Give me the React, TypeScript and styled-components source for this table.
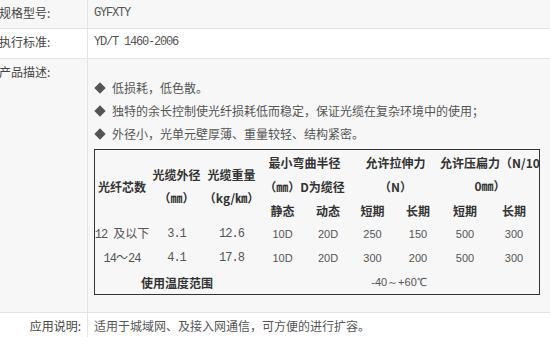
import React, { FC } from 'react';
import styled, { createGlobalStyle } from 'styled-components';

const GlobalStyle = createGlobalStyle`
  body {
    margin: 0;
    background: #ffffff;
    font-family: 'Noto Sans CJK SC', 'Liberation Sans', sans-serif;
    font-size: 12px;
    color: #444;
  }
`;

const StyledSpec = styled.div`
  width: 550px;
  overflow: hidden;
`;

const StyledRow = styled.div<{ $shade?: boolean; $height?: number }>`
  display: grid;
  grid-template-columns: 88px 1fr;
  min-height: ${({ $height }) => ($height ? `${$height}px` : 'auto')};
  background: ${({ $shade }) => ($shade ? '#f7f7f7' : '#ffffff')};
  border-bottom: 1px solid #e4e4e4;
`;

const StyledLabel = styled.div<{ $right?: boolean }>`
  border-right: 1px solid #e4e4e4;
  padding: 3px 6px 0 0;
  line-height: 20px;
  color: #444;
  white-space: nowrap;
  text-align: ${({ $right }) => ($right ? 'right' : 'left')};
  text-indent: ${({ $right }) => ($right ? '0' : '-1px')};
`;

const StyledValue = styled.div<{ $mono?: boolean }>`
  padding: 3px 0 0 6px;
  line-height: 20px;
  color: #555;
  white-space: nowrap;
  font-family: ${({ $mono }) =>
    $mono ? "'Liberation Mono', monospace" : "'Noto Sans CJK SC', sans-serif"};
  letter-spacing: ${({ $mono }) => ($mono ? '-1.2px' : '0')};
`;

const StyledDescription = styled.div`
  padding: 17px 0 17px 6px;
`;

const StyledPoint = styled.div`
  display: flex;
  align-items: center;
  height: 23px;
  color: #555;
  white-space: nowrap;
`;

const StyledDiamond = styled.span`
  flex: none;
  display: inline-block;
  width: 8px;
  height: 8px;
  margin: 0 8px 0 2px;
  background: #555;
  transform: rotate(45deg);
`;

const StyledTable = styled.div`
  display: grid;
  grid-template-columns: 54px 55px 55px 47px 44px 45px 46px 48px 50px;
  grid-template-rows: repeat(6, 24px);
  width: 444px;
  margin-top: 4px;
  border: 1px solid #333;
`;

const StyledCell = styled.div<{
  $col: string;
  $row: string;
  $bold?: boolean;
  $kind?: 'mono' | 'sans';
}>`
  grid-column: ${({ $col }) => $col};
  grid-row: ${({ $row }) => $row};
  display: flex;
  flex-direction: column;
  align-items: center;
  justify-content: center;
  white-space: nowrap;
  line-height: 23px;
  text-align: center;
  font-weight: ${({ $bold }) => ($bold ? 700 : 400)};
  color: ${({ $bold }) => ($bold ? '#333' : '#555')};
  font-family: ${({ $kind }) =>
    $kind === 'mono'
      ? "'Liberation Mono', monospace"
      : $kind === 'sans'
      ? "'Liberation Sans', sans-serif"
      : "'Noto Sans CJK SC', sans-serif"};
  font-size: ${({ $kind }) => ($kind === 'sans' ? '11px' : '12px')};
  letter-spacing: ${({ $kind }) => ($kind === 'mono' ? '-1px' : '0')};
`;

const StyledMono = styled.span`
  font-family: 'Liberation Mono', monospace;
  letter-spacing: -1px;
`;

const points = [
  '低损耗，低色散。',
  '独特的余长控制使光纤损耗低而稳定，保证光缆在复杂环境中的使用；',
  '外径小，光单元壁厚薄、重量较轻、结构紧密。',
];

const rows = [
  ['12', '3.1', '12.6', '10D', '20D', '250', '150', '500', '300'],
  ['14～24', '4.1', '17.8', '10D', '20D', '300', '200', '500', '300'],
];

const Table: FC = () => (
  <StyledTable>
    <StyledCell $col="1" $row="1 / 4" $bold>
      光纤芯数
    </StyledCell>
    <StyledCell $col="2" $row="1 / 4" $bold>
      <span>光缆外径</span>
      <span>（㎜）</span>
    </StyledCell>
    <StyledCell $col="3" $row="1 / 4" $bold>
      <span>光缆重量</span>
      <span>（kg/㎞）</span>
    </StyledCell>
    <StyledCell $col="4 / 6" $row="1" $bold>
      最小弯曲半径
    </StyledCell>
    <StyledCell $col="6 / 8" $row="1" $bold>
      允许拉伸力
    </StyledCell>
    <StyledCell $col="8 / 10" $row="1 / 3" $bold>
      <span>允许压扁力（N/10</span>
      <span>0㎜）</span>
    </StyledCell>
    <StyledCell $col="4 / 6" $row="2" $bold>
      （㎜）D为缆径
    </StyledCell>
    <StyledCell $col="6 / 8" $row="2" $bold>
      （N）
    </StyledCell>
    {['静态', '动态', '短期', '长期', '短期', '长期'].map((h, i) => (
      <StyledCell key={i} $col={`${i + 4}`} $row="3" $bold>
        {h}
      </StyledCell>
    ))}
    {rows.map((r, ri) =>
      r.map((v, ci) => (
        <StyledCell
          key={`${ri}-${ci}`}
          $col={`${ci + 1}`}
          $row={`${ri + 4}`}
          $kind={ci === 0 ? undefined : ci < 3 ? 'mono' : 'sans'}
        >
          {ci === 0 && ri === 0 ? (
            <span>
              <StyledMono>12 </StyledMono>及以下
            </span>
          ) : ci === 0 ? (
            <span>
              <StyledMono>14</StyledMono>～<StyledMono>24</StyledMono>
            </span>
          ) : (
            v
          )}
        </StyledCell>
      ))
    )}
    <StyledCell $col="1 / 4" $row="6" $bold>
      使用温度范围
    </StyledCell>
    <StyledCell $col="4 / 10" $row="6" $kind="sans">
      -40～+60℃
    </StyledCell>
  </StyledTable>
);

const App: FC = () => (
  <StyledSpec>
    <GlobalStyle />
    <StyledRow $shade $height={28}>
      <StyledLabel>规格型号:</StyledLabel>
      <StyledValue $mono>GYFXTY</StyledValue>
    </StyledRow>
    <StyledRow $height={29}>
      <StyledLabel>执行标准:</StyledLabel>
      <StyledValue $mono>YD/T 1460-2006</StyledValue>
    </StyledRow>
    <StyledRow $shade>
      <StyledLabel>产品描述:</StyledLabel>
      <StyledDescription>
        {points.map((p) => (
          <StyledPoint key={p}>
            <StyledDiamond aria-hidden="true" />
            {p}
          </StyledPoint>
        ))}
        <Table />
      </StyledDescription>
    </StyledRow>
    <StyledRow $height={28}>
      <StyledLabel $right>应用说明:</StyledLabel>
      <StyledValue>适用于城域网、及接入网通信，可方便的进行扩容。</StyledValue>
    </StyledRow>
  </StyledSpec>
);

export default App;
